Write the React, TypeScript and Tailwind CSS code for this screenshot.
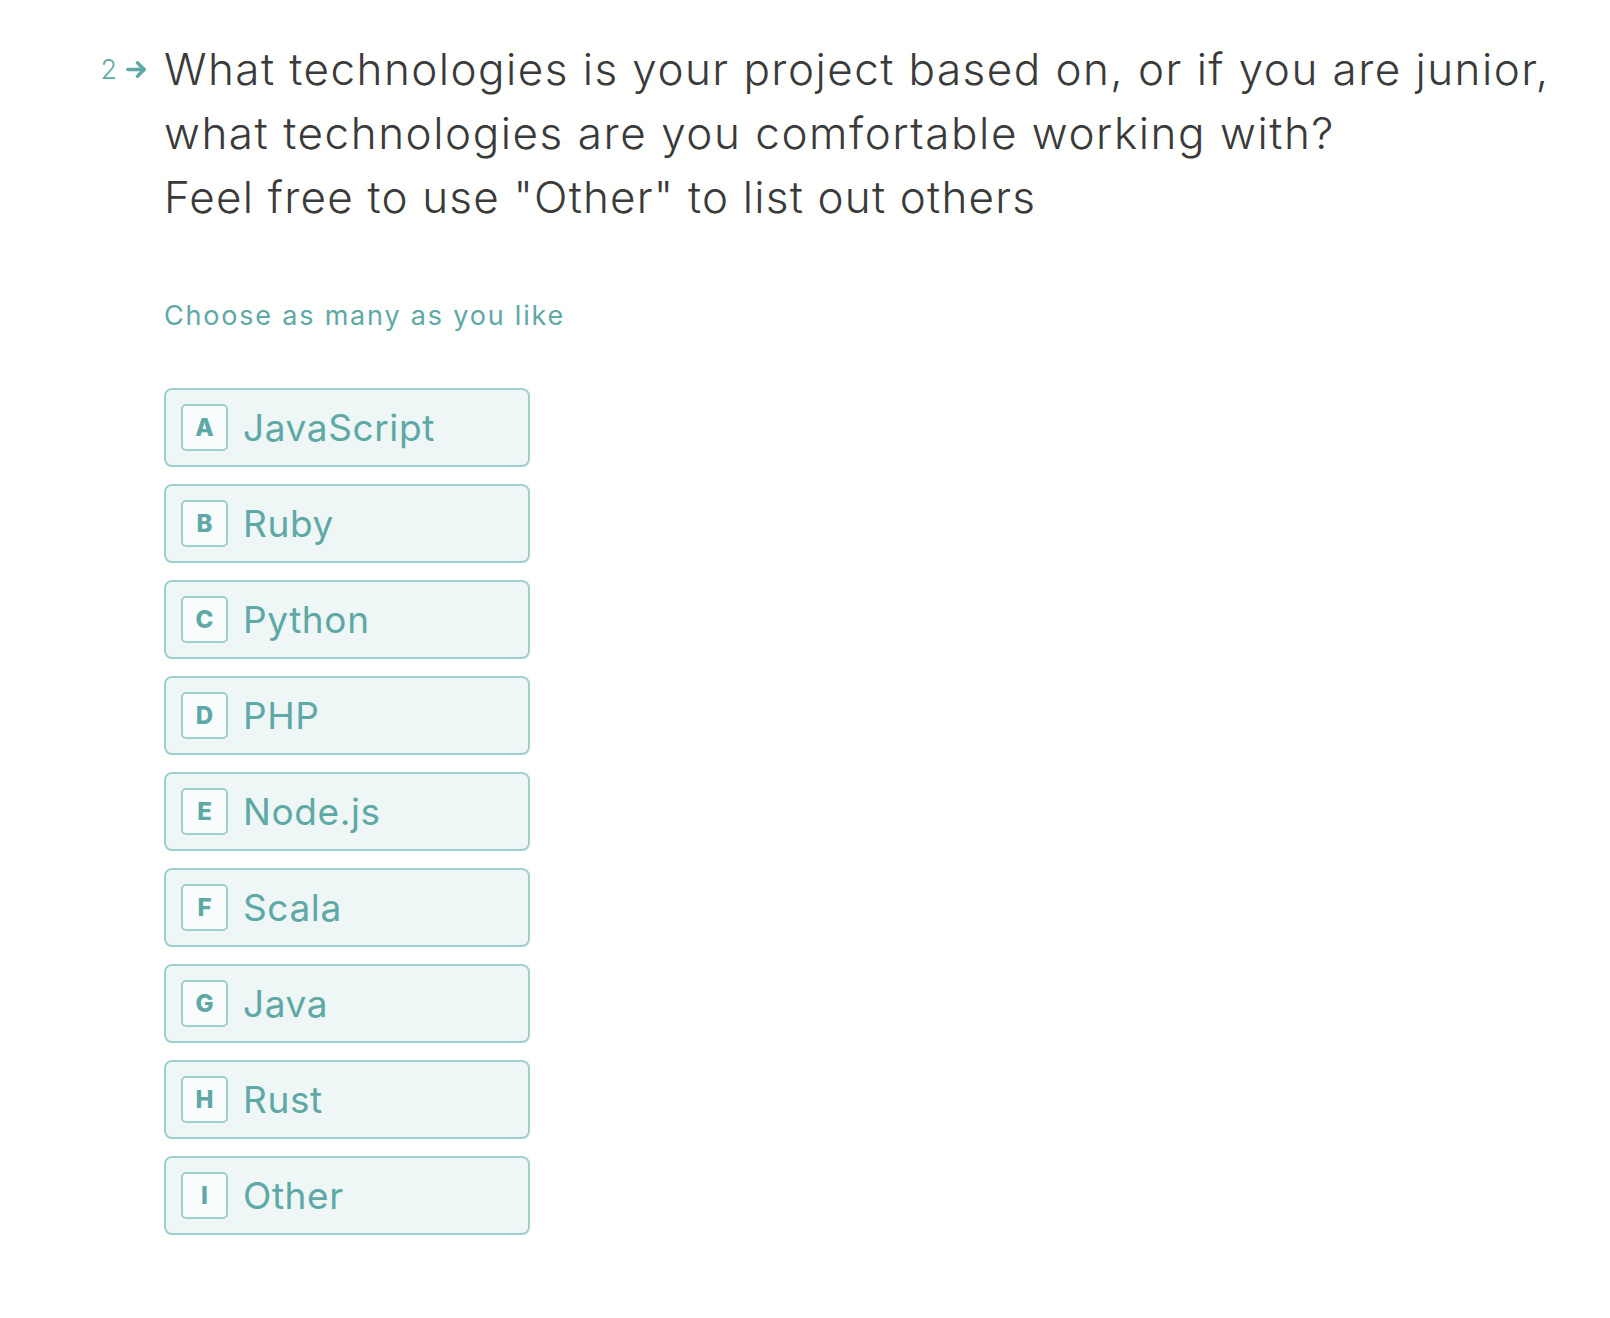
const options = [
  { key: "A", label: "JavaScript" },
  { key: "B", label: "Ruby" },
  { key: "C", label: "Python" },
  { key: "D", label: "PHP" },
  { key: "E", label: "Node.js" },
  { key: "F", label: "Scala" },
  { key: "G", label: "Java" },
  { key: "H", label: "Rust" },
  { key: "I", label: "Other" },
];

export default function App() {
  return (
    <div
      className="min-h-[1318px] bg-white pt-[37px]"
      style={{ fontFamily: "Inter, 'Open Sans', sans-serif" }}
    >
      <div className="flex">
        <div className="flex h-[64px] w-[164px] shrink-0 items-center justify-end gap-[8px] pr-[16px]">
          <span className="text-[27px] font-light leading-none text-[#5ea8a6]">2</span>
          <svg viewBox="0 0 24 24" className="h-[23px] w-[23px] text-[#5ea8a6]" fill="none" stroke="currentColor" strokeWidth="3.6" strokeLinecap="round" strokeLinejoin="round">
            <path d="M3 12h17" />
            <path d="M13 5l7 7-7 7" />
          </svg>
        </div>
        <div className="flex flex-col">
          <h1 className="text-[44px] font-light leading-[64px] tracking-[1.2px] text-[#3a3a3a]">
            <span className="block whitespace-nowrap tracking-[1.45px]">What technologies is your project based on, or if you are junior,</span>
            <span className="block whitespace-nowrap tracking-[1.55px]">what technologies are you comfortable working with?</span>
            <span className="block whitespace-nowrap">Feel free to use "Other" to list out others</span>
          </h1>
          <p className="mt-[67px] text-[27px] leading-[40px] tracking-[1.8px] text-[#5ea8a6]">
            Choose as many as you like
          </p>
          <div className="mt-[52px] flex flex-col gap-[17px]">
            {options.map((o) => (
              <button
                key={o.key}
                className="flex h-[79px] w-[366px] items-center gap-[15px] rounded-[8px] border-2 border-[#9ecfcd] bg-[#eef6f6] pl-[15px] text-left"
              >
                <span className="flex h-[47px] w-[47px] shrink-0 items-center justify-center rounded-[5px] border-2 border-[#9ecfcd] bg-[#f9fcfc] text-[24px] font-extrabold text-[#5ea8a6]">
                  {o.key}
                </span>
                <span className="text-[37px] font-normal leading-none tracking-[0.6px] text-[#5ea8a6]">
                  {o.label}
                </span>
              </button>
            ))}
          </div>
        </div>
      </div>
    </div>
  );
}
